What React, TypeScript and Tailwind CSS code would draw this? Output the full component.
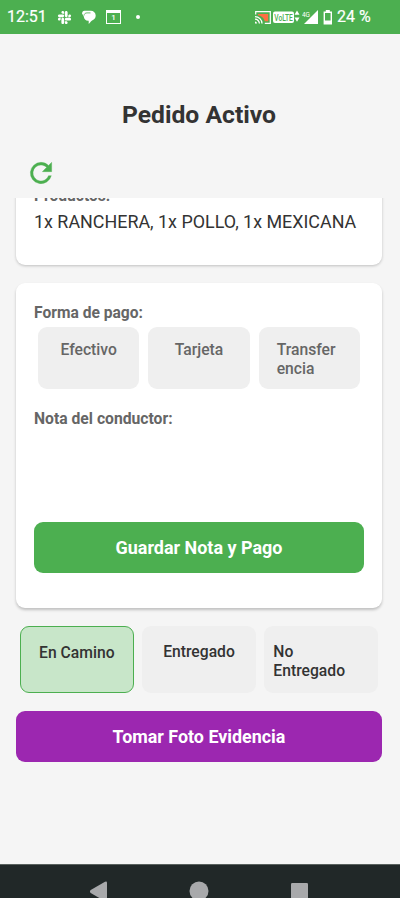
import React from "react";
import { FaSlack } from "react-icons/fa";

const paymentMethods = ["Efectivo", "Tarjeta", "Transfer encia"];

const StatusBar = () => {
  return (
    <div className="h-[34px] shrink-0 bg-[#4caf50] text-white flex items-center pl-[7px] pr-[30px]">
      <span className="w-[50px] text-[16px] font-normal [-webkit-text-stroke:0.2px_white] leading-none">12:51</span>
      <FaSlack className="w-[15px] h-[15px]" />

      {/* Chat bubble */}
      <svg className="ml-[10px] w-[14px] h-[14px]" viewBox="0 0 14 14">
        <path d="M2.400.8H8.500a4.800 4.800 0 0 1 5.200 4.600c0 2.500-1.400 4-3.200 4.800-1 .5-2 1.800-3.800 3.800V10.800H6.200C3.500 10.600 2 9 1.800 6.500L0 3.600C.2 2 .9.800 2.400.8Z" fill="currentColor" />
        <path d="M2 5.600C2.200 3.800 3.300 2.900 5 2.900H8.500" stroke="#4caf50" strokeWidth="0.8" fill="none" />
      </svg>

      {/* Calendar */}
      <div className="ml-[10px] w-[15px] h-[14px] border border-t-[3px] border-white flex items-center justify-center text-[8px] leading-none font-medium">
        1
      </div>
      <div className="ml-[15px] w-1 h-1 rounded-full bg-white" />

      <div className="ml-auto flex items-center">
        {/* Screen cast */}
        <svg className="w-[16px] h-[13px]" viewBox="0 0 16 13" fill="none">
          <path d="M3 3h10.200v7.200H9.800C9 7.200 6.500 4.800 3 4.300Z" fill="#ff7043" />
          <path d="M.7 3.500V.7h14.600v11.600H9.800" stroke="white" strokeWidth="1.200" />
          <path d="M0 5.600a7 7 0 0 1 7 7M0 8.200a4.400 4.400 0 0 1 4.400 4.400" stroke="white" strokeWidth="1.300" />
          <path d="M0 10.500a2 2 0 0 1 2 2H0Z" fill="white" />
        </svg>
        <svg className="ml-[2px] w-[27px] h-[14px]" viewBox="0 0 27 14">
          <rect x="0" y="1.500" width="21" height="11.500" rx="2" fill="white" />
          <text x="10.500" y="10.700" textAnchor="middle" textLength="18.500" lengthAdjust="spacingAndGlyphs" fontSize="9.500" fontWeight="500" fill="#4caf50" className="font-[Roboto,sans-serif]">
            VoLTE
          </text>
          <path d="m21.500 4.800 2.500-4.300 2.500 4.300ZM21.500 7.500h5L24 11.800Z" fill="white" />
        </svg>
        {/* Mobile signal */}
        <svg className="ml-[2px] w-[17px] h-[15px]" viewBox="0 0 17 15">
          <text x="0" y="7" textLength="8" lengthAdjust="spacingAndGlyphs" fontSize="7.500" fill="white" className="font-[Roboto,sans-serif]">
            4G
          </text>
          <path d="M16 0v14H2Z" fill="white" />
        </svg>
        {/* Battery */}
        <svg className="ml-[4px] w-[10px] h-[15px]" viewBox="0 0 10 15">
          <path d="M2.800 0h4v1.500H9V14.500H.6V1.500h2.200ZM2 3v7.500h5.600V3Z" fill="white" fillRule="evenodd" />
        </svg>
        <span className="ml-[4px] w-[33px] text-[16px] font-normal [-webkit-text-stroke:0.2px_white] leading-none whitespace-nowrap">24 %</span>
      </div>
    </div>
  );
};

const NavigationBar = () => {
  return (
    <div className="h-[34px] shrink-0 bg-[#212828] border-t border-[#59615e] overflow-hidden">
      <svg width="400" height="33" viewBox="0 0 400 33" fill="#a8a9ab">
        <path d="M90.700 25 105 16.800q2-.8 2 1v17.500q0 1.800-2 1L90.700 28q-1.500-1.500 0-3Z" />
        <circle cx="199" cy="26" r="9.500" />
        <rect x="291" y="18" width="17" height="17" rx="1.300" />
      </svg>
    </div>
  );
};

const App = () => {
  return (
    <div className="w-full h-screen flex flex-col overflow-hidden bg-[#f5f5f5] text-[#333333] font-[Roboto,sans-serif]">
      <StatusBar />

      {/* Header */}
      <header className="h-[164px] shrink-0 pt-[66px]">
        <h1 className="text-center text-[24.700px] leading-[30px] font-bold pr-[2px]">Pedido Activo</h1>
        <button className="block ml-[24.500px] mt-[26.500px] text-[#4caf50]">
          {/* Refresh */}
          <svg className="w-8 h-8" viewBox="0 0 24 24" fill="currentColor" stroke="currentColor" strokeWidth="0.25">
            <path d="M17.650 6.350A7.960 7.960 0 0 0 12 4a8 8 0 1 0 7.730 10h-2.080A6 6 0 1 1 12 6c1.660 0 3.140.690 4.220 1.780L13 11h7V4l-2.350 2.350Z" />
          </svg>
        </button>
      </header>

      {/* Order content */}
      <main className="flex-1 min-h-0 overflow-hidden pl-[16px] pr-[18px]">
        {/* Products, scrolled partly under the header */}
        <section className="-mt-[30px] h-[97px] bg-white rounded-[9px] px-[18px] pt-[19px] shadow-[0_1px_3px_rgba(0,0,0,0.22)]">
          <p className="text-[15.600px] leading-[18px] font-bold text-[#666666]">Productos:</p>
          <p className="mt-[6px] text-[17.900px] leading-[22px] whitespace-nowrap">
            1x RANCHERA, 1x POLLO, 1x MEXICANA
          </p>
        </section>

        {/* Payment and driver note */}
        <section className="mt-[18px] h-[325px] bg-white rounded-[9px] px-[18px] pt-[20px] shadow-[0_2px_3px_rgba(0,0,0,0.22)]">
          <p className="text-[15.600px] leading-[20px] font-bold text-[#666666]">Forma de pago:</p>
          <div className="mt-1 px-1 grid grid-cols-3 gap-[9px]">
            {paymentMethods.map((method) => (
              <button
                key={method}
                className="h-[62px] rounded-[9px] bg-[#efefef] px-[18px] pt-[14px] flex justify-center items-start text-left text-[15.700px] leading-[18.500px] font-medium text-[#666666]"
              >
                {method}
              </button>
            ))}
          </div>
          <p className="mt-[20px] text-[15.700px] leading-[20px] font-bold text-[#666666]">Nota del conductor:</p>
          <button className="mt-[93px] w-full h-[51px] pt-[2px] rounded-[9px] bg-[#4caf50] text-white text-[17.950px] font-bold">
            Guardar Nota y Pago
          </button>
        </section>

        {/* Delivery status */}
        <div className="mt-[18px] px-1 grid grid-cols-3 gap-[8.500px] text-[15.700px] leading-[18.500px] font-medium text-left">
          <button className="h-[67px] rounded-[9px] border border-[#4caf50] bg-[#c8e6c9] pt-[17px] flex justify-center items-start">
            En Camino
          </button>
          <button className="h-[67px] rounded-[9px] bg-[#efefef] pt-[17px] flex justify-center items-start">
            Entregado
          </button>
          <button className="h-[67px] rounded-[9px] bg-[#efefef] pt-[17px] pl-[9px] pr-[18px] flex items-start text-left">
            No Entregado
          </button>
        </div>

        <button className="mt-[18px] w-full h-[51px] pt-[2px] rounded-[9px] bg-[#9c27b0] text-white text-[17.900px] font-bold">
          Tomar Foto Evidencia
        </button>
      </main>

      <NavigationBar />
    </div>
  );
};

export default App;
